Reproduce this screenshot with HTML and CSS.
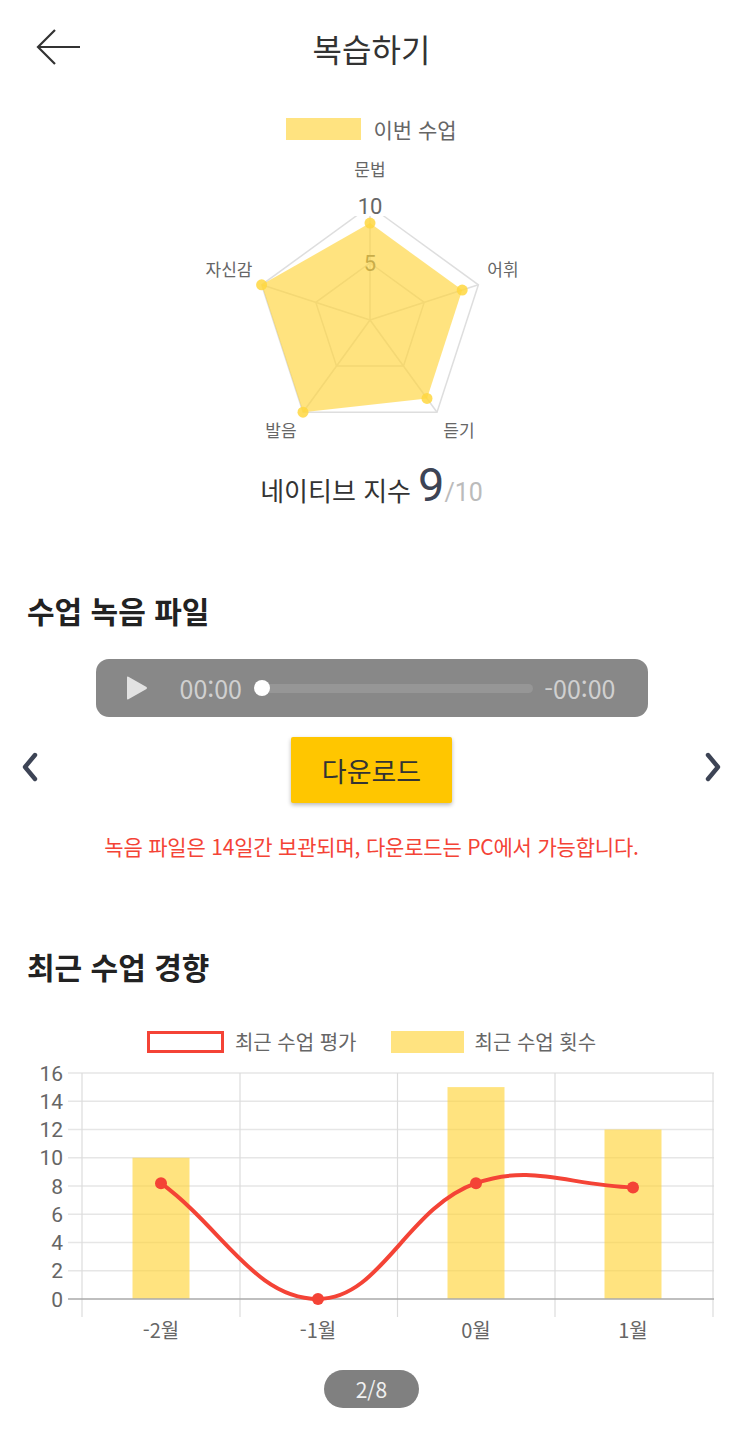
FILE: index.html
```html
<!DOCTYPE html>
<html lang="ko">
<head>
<meta charset="utf-8">
<title>복습하기</title>
<link rel="stylesheet" href="styles.css">
</head>
<body>
<div class="page">
  <header class="top">
    <button class="back" aria-label="뒤로">
      <svg width="46" height="38" viewBox="0 0 46 38"><path d="M19 1 L2 18 L19 35 M2 18 L44 18" fill="none" stroke="#333" stroke-width="2.2"/></svg>
    </button>
    <h1 class="title">복습하기</h1>
    <span class="spacer"></span>
  </header>

  <section class="radar-card">
    <div class="legend">
      <span class="swatch swatch-fill"></span><span class="legend-text">이번 수업</span>
    </div>
    <svg class="radar" width="743" height="300" viewBox="0 0 743 300">
      <g fill="none" stroke="#dedede" stroke-width="1.5">
        <polygon points="370,56 478.4,134.8 437,262.2 303,262.2 261.6,134.8"/>
        <polygon points="370,113 424.2,152.4 403.5,216.1 336.5,216.1 315.8,152.4"/>
        <line x1="370" y1="170" x2="370" y2="56"/>
        <line x1="370" y1="170" x2="478.4" y2="134.8"/>
        <line x1="370" y1="170" x2="437" y2="262.2"/>
        <line x1="370" y1="170" x2="303" y2="262.2"/>
        <line x1="370" y1="170" x2="261.6" y2="134.8"/>
      </g>
      <text class="tick" x="370" y="121" text-anchor="middle">5</text>
      <polygon points="370,73.1 462.2,140.1 427,248.4 303,262.2 261.6,134.8" fill="#ffd43b" fill-opacity="0.65"/>
      <rect x="355" y="46" width="30" height="20" fill="#fff"/>
      <text class="tick" x="370" y="64" text-anchor="middle">10</text>
      <g fill="#ffd740" fill-opacity="0.85">
        <circle cx="370" cy="73.1" r="5.5"/>
        <circle cx="462.2" cy="140.1" r="5.5"/>
        <circle cx="427" cy="248.4" r="5.5"/>
        <circle cx="303" cy="262.2" r="5.5"/>
        <circle cx="261.6" cy="134.8" r="5.5"/>
      </g>
      <g class="axis-label" text-anchor="middle">
        <text x="370" y="26">문법</text>
        <text x="503" y="126">어휘</text>
        <text x="459" y="287">듣기</text>
        <text x="281" y="287">발음</text>
        <text x="229" y="126">자신감</text>
      </g>
    </svg>
    <div class="score">
      <span class="score-label">네이티브 지수</span><span class="score-value">9</span><span class="score-max">/10</span>
    </div>
  </section>

  <section class="recording">
    <h2 class="section-title">수업 녹음 파일</h2>
    <div class="player">
      <svg class="play" width="22" height="24" viewBox="0 0 22 24"><path d="M1 1.5 Q1 0 2.4 0.8 L20.5 11 Q21.5 12 20.5 13 L2.4 23.2 Q1 24 1 22.5 Z" fill="#e2e2e2"/></svg>
      <span class="time">00:00</span>
      <div class="track"><span class="thumb"></span></div>
      <span class="time">-00:00</span>
    </div>
    <div class="dl-row">
      <svg class="chev" width="20" height="30" viewBox="0 0 20 30"><path d="M15 3 L5 15 L15 27" fill="none" stroke="#3d4455" stroke-width="4.4" stroke-linecap="round" stroke-linejoin="round"/></svg>
      <button class="download">다운로드</button>
      <svg class="chev" width="20" height="30" viewBox="0 0 20 30"><path d="M5 3 L15 15 L5 27" fill="none" stroke="#3d4455" stroke-width="4.4" stroke-linecap="round" stroke-linejoin="round"/></svg>
    </div>
    <p class="note">녹음 파일은 14일간 보관되며, 다운로드는 PC에서 가능합니다.</p>
  </section>

  <section class="trend">
    <h2 class="section-title">최근 수업 경향</h2>
    <div class="legend chart-legend">
      <span class="swatch swatch-line"></span><span class="legend-text">최근 수업 평가</span>
      <span class="swatch swatch-fill"></span><span class="legend-text">최근 수업 횟수</span>
    </div>
    <svg class="chart" width="743" height="290" viewBox="0 0 743 290">
      <g stroke="#e6e6e6" stroke-width="1.5">
        <line x1="68" y1="13" x2="714" y2="13"/>
        <line x1="68" y1="41.25" x2="714" y2="41.25"/>
        <line x1="68" y1="69.5" x2="714" y2="69.5"/>
        <line x1="68" y1="97.75" x2="714" y2="97.75"/>
        <line x1="68" y1="126" x2="714" y2="126"/>
        <line x1="68" y1="154.25" x2="714" y2="154.25"/>
        <line x1="68" y1="182.5" x2="714" y2="182.5"/>
        <line x1="68" y1="210.75" x2="714" y2="210.75"/>
      </g>
      <g stroke="#dcdcdc" stroke-width="1.2">
        <line x1="82" y1="13" x2="82" y2="257"/>
        <line x1="240" y1="13" x2="240" y2="257"/>
        <line x1="397.5" y1="13" x2="397.5" y2="257"/>
        <line x1="555" y1="13" x2="555" y2="257"/>
        <line x1="713" y1="13" x2="713" y2="257"/>
      </g>
      <g fill="#ffd43b" fill-opacity="0.65">
        <rect x="132.5" y="97.75" width="57" height="141.25"/>
        <rect x="447.5" y="27.1" width="57" height="211.9"/>
        <rect x="604.5" y="69.5" width="57" height="169.5"/>
      </g>
      <line x1="68" y1="239" x2="714" y2="239" stroke="#aaa" stroke-width="1.5"/>
      <path d="M161,123.2 C223.8,169.5 255.1,239 318,239 C381.1,239 406.1,148 476,123.2 C532.1,103.3 570.2,125.7 633,127.4" fill="none" stroke="#f44336" stroke-width="4"/>
      <g fill="#f44336">
        <circle cx="161" cy="123.2" r="6"/>
        <circle cx="318" cy="239" r="6"/>
        <circle cx="476" cy="123.2" r="6"/>
        <circle cx="633" cy="127.4" r="6"/>
      </g>
      <g class="y-label" text-anchor="end">
        <text x="63" y="20.5">16</text>
        <text x="63" y="48.75">14</text>
        <text x="63" y="77">12</text>
        <text x="63" y="105.25">10</text>
        <text x="63" y="133.5">8</text>
        <text x="63" y="161.75">6</text>
        <text x="63" y="190">4</text>
        <text x="63" y="218.25">2</text>
        <text x="63" y="246.5">0</text>
      </g>
      <g class="x-label" text-anchor="middle">
        <text x="161" y="278">-2월</text>
        <text x="318" y="278">-1월</text>
        <text x="476" y="278">0월</text>
        <text x="633" y="278">1월</text>
      </g>
    </svg>
    <div class="pager">2/8</div>
  </section>
</div>
</body>
</html>
```

FILE: styles.css
```css
* { box-sizing: border-box; }

html, body {
  margin: 0;
  padding: 0;
  background: #fff;
}

body {
  font-family: "Noto Sans CJK KR", "Noto Sans", sans-serif;
  color: #333;
}

.page {
  width: 743px;
  display: flex;
  flex-direction: column;
}

.top {
  height: 96px;
  display: grid;
  grid-template-columns: 1fr auto 1fr;
  align-items: center;
}

.back {
  justify-self: start;
  margin-left: 36px;
  padding: 0;
  border: 0;
  background: none;
  display: flex;
}

.title {
  margin: 0;
  font-size: 32px;
  font-weight: 400;
  line-height: 40px;
  color: #333;
}

.legend {
  display: flex;
  justify-content: center;
  align-items: center;
  height: 22px;
}

.radar-card {
  display: flex;
  flex-direction: column;
  padding-top: 22px;
}

.swatch {
  width: 75px;
  height: 22px;
  flex: none;
}

.swatch-fill {
  background: #ffe380;
}

.swatch-line {
  width: 77px;
  border: 3.5px solid #f44336;
  background: #fff;
}

.legend-text {
  font-size: 21px;
  line-height: 22px;
  color: #666;
  margin-left: 12px;
}

.radar {
  display: block;
  margin-top: 10px;
}

.radar .axis-label {
  font-family: "Noto Sans CJK KR", sans-serif;
  font-size: 17px;
  fill: #666;
}

.radar .tick {
  font-family: Roboto, "Noto Sans", sans-serif;
  font-size: 22px;
  fill: #666;
}

.score {
  margin-top: 10px;
  height: 50px;
  display: flex;
  justify-content: center;
  align-items: baseline;
  padding-left: 0;
}

.score-label {
  font-size: 26px;
  color: #333;
  line-height: 50px;
}

.score-value {
  font-family: Roboto, "Noto Sans", sans-serif;
  font-size: 47px;
  font-weight: 400;
  color: #3d4455;
  margin-left: 7px;
  line-height: 50px;
}

.score-max {
  font-family: Roboto, "Noto Sans", sans-serif;
  font-size: 25px;
  color: #bbb;
  line-height: 50px;
}

.recording {
  display: flex;
  flex-direction: column;
  padding-top: 82px;
}

.section-title {
  margin: 0;
  padding-left: 27px;
  font-size: 30px;
  font-weight: 700;
  line-height: 36px;
  color: #222;
}

.player {
  margin: 31px auto 0;
  width: 552px;
  height: 58px;
  border-radius: 13px;
  background: #888;
  display: flex;
  align-items: center;
  padding: 0 32px 0 30px;
}

.play {
  flex: none;
}

.time {
  font-size: 25px;
  color: #d0d0d0;
  line-height: 58px;
}

.player .play + .time {
  margin-left: 32px;
}

.track {
  flex: 1;
  height: 9px;
  border-radius: 5px;
  background: #969696;
  margin: 0 11px 0 16px;
  position: relative;
}

.thumb {
  position: absolute;
  left: -4px;
  top: 50%;
  width: 16px;
  height: 16px;
  margin-top: -8px;
  border-radius: 50%;
  background: #fff;
}

.dl-row {
  margin-top: 20px;
  height: 66px;
  display: flex;
  justify-content: space-between;
  align-items: center;
  padding: 0 20px 0 20px;
}

.chev {
  margin-top: -6px;
}

.download {
  width: 161px;
  height: 66px;
  border: 0;
  border-radius: 2px;
  background: #ffc600;
  box-shadow: 0 2px 4px rgba(0, 0, 0, 0.28);
  font-family: "Noto Sans CJK KR", sans-serif;
  font-size: 27px;
  color: #333;
  padding: 0;
}

.note {
  margin: 30px 0 0;
  text-align: center;
  font-size: 21px;
  line-height: 26px;
  color: #f44336;
  letter-spacing: -0.2px;
}

.trend {
  display: flex;
  flex-direction: column;
  padding-top: 89px;
}

.chart-legend {
  margin-top: 47px;
}

.chart-legend .swatch-fill {
  margin-left: 34px;
  width: 73px;
}

.chart-legend .legend-text {
  margin-left: 11px;
  font-size: 20px;
}

.chart {
  display: block;
  margin-top: 7px;
}

.chart .y-label,
.chart .x-label {
  font-family: Roboto, "Noto Sans CJK KR", sans-serif;
  font-size: 21px;
  fill: #666;
}

.chart .x-label {
  font-family: "Noto Sans CJK KR", Roboto, sans-serif;
  font-size: 20px;
}

.pager {
  margin: 20px auto 0;
  width: 95px;
  height: 38px;
  border-radius: 19px;
  background: #808080;
  color: #f0f0f0;
  font-size: 21px;
  line-height: 38px;
  text-align: center;
}
```
